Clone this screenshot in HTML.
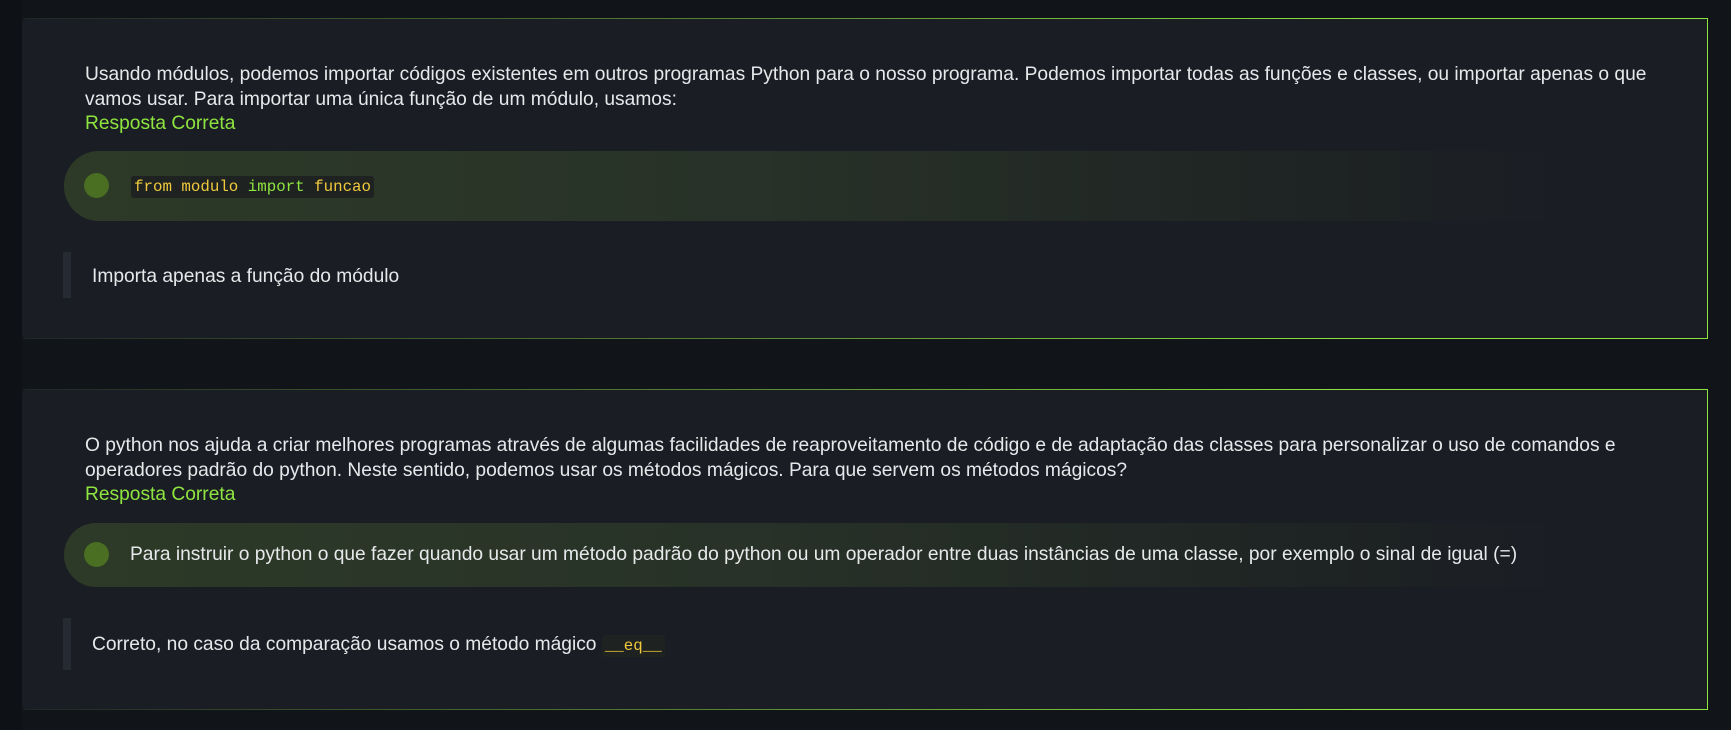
<!DOCTYPE html>
<html><head><meta charset="utf-8"><style>
html,body{margin:0;padding:0;}
body{width:1731px;height:730px;background:#111419;font-family:"Liberation Sans",sans-serif;position:relative;overflow:hidden;}
.strip{position:absolute;left:0;top:0;width:22px;height:730px;background:#0e1115;}
.card{position:absolute;left:22px;width:1686px;background:#1a1d24;border-radius:5px;box-sizing:border-box;}
.card .bt,.card .bb{position:absolute;left:0;right:0;height:1px;background:linear-gradient(to right,rgba(142,229,63,0.05),rgba(142,229,63,0.5) 40%,#8ee53f 80%);}
.card .bt{top:0}.card .bb{bottom:0}
.card .br{position:absolute;right:0;top:0;bottom:0;width:1px;background:#8ee53f;}
.q{position:absolute;left:63px;font-size:19.2px;line-height:24.5px;color:#e6e8ea;}
.ok{color:#8ee53f;}
.pill{position:absolute;left:42px;width:1520px;height:70px;border-radius:35px 0 0 35px;background:linear-gradient(to right,#2d3a27 0%,#283228 45%,rgba(30,35,35,0.9) 85%,rgba(26,29,36,0) 100%);}
.dot{position:absolute;left:20px;top:22px;width:25px;height:25px;border-radius:50%;background:#4a6e22;}
.pill .t{position:absolute;left:67px;top:0;line-height:70px;font-size:19.2px;color:#e6e8ea;white-space:nowrap;}
code{font-family:"Liberation Mono",monospace;font-size:15.8px;background:#1e2220;padding:2px 3px;border-radius:3px;color:#f0c93c;}
.g{color:#8ee53f}
.fb{position:absolute;left:41px;width:8px;background:#262a33;}
.fbt{position:absolute;left:70px;font-size:19.2px;color:#e6e8ea;white-space:nowrap;}
</style></head><body>
<div class="strip"></div>
<div class="card" style="top:18px;height:321px;">
<div class="bt"></div><div class="bb"></div><div class="br"></div>
<div class="q" style="top:45px;width:1575px;">Usando módulos, podemos importar códigos existentes em outros programas Python para o nosso programa. Podemos importar todas as funções e classes, ou importar apenas o que vamos usar. Para importar uma única função de um módulo, usamos:<br><span class="ok">Resposta Correta</span></div>
<div class="pill" style="top:133px;"><div class="dot"></div><div class="t"><code>from modulo <span class="g">import</span> funcao</code></div></div>
<div class="fb" style="top:234px;height:46px;"></div>
<div class="fbt" style="top:248px;">Importa apenas a função do módulo</div>
</div>
<div class="card" style="top:389px;height:321px;">
<div class="bt"></div><div class="bb"></div><div class="br"></div>
<div class="q" style="top:45px;width:1548px;">O python nos ajuda a criar melhores programas através de algumas facilidades de reaproveitamento de código e de adaptação das classes para personalizar o uso de comandos e operadores padrão do python. Neste sentido, podemos usar os métodos mágicos. Para que servem os métodos mágicos?<br><span class="ok">Resposta Correta</span></div>
<div class="pill" style="top:134px;height:64px;"><div class="dot" style="top:19px"></div><div class="t" style="left:66px;line-height:64px">Para instruir o python o que fazer quando usar um método padrão do python ou um operador entre duas instâncias de uma classe, por exemplo o sinal de igual (=)</div></div>
<div class="fb" style="top:229px;height:52px;"></div>
<div class="fbt" style="top:245px;">Correto, no caso da comparação usamos o método mágico <code>__eq__</code></div>
</div>
</body></html>
